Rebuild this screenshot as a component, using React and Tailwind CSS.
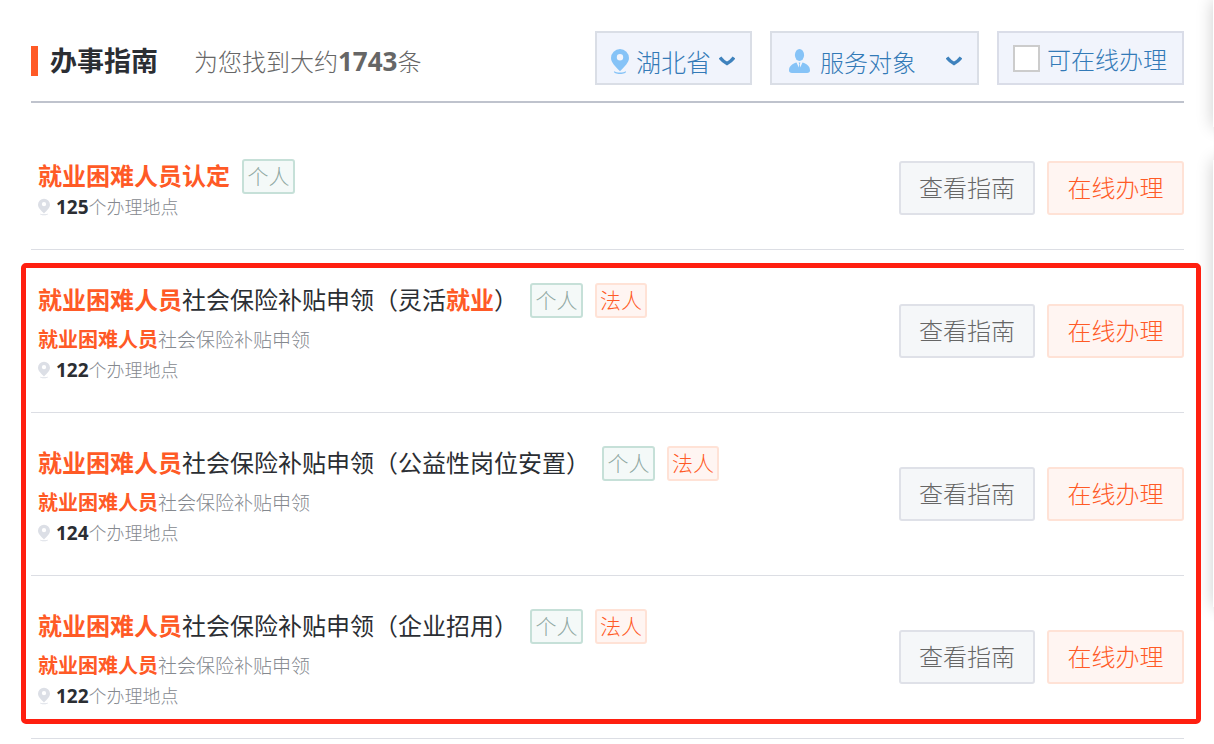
import { useState } from 'react';

const results = [
  {
    title: [{ text: '就业困难人员认定', hit: true }],
    tags: ['个人'],
    places: 125,
  },
  {
    title: [
      { text: '就业困难人员', hit: true },
      { text: '社会保险补贴申领（灵活' },
      { text: '就业', hit: true },
      { text: '）' },
    ],
    summary: true,
    tags: ['个人', '法人'],
    places: 122,
  },
  {
    title: [{ text: '就业困难人员', hit: true }, { text: '社会保险补贴申领（公益性岗位安置）' }],
    summary: true,
    tags: ['个人', '法人'],
    places: 124,
  },
  {
    title: [{ text: '就业困难人员', hit: true }, { text: '社会保险补贴申领（企业招用）' }],
    summary: true,
    tags: ['个人', '法人'],
    places: 122,
  },
];

const tagStyles = {
  个人: 'w-[53px] border-[#c6e0d8] bg-[#f4f9f8] text-[#8fa8a2]',
  法人: 'w-[52px] border-[#ffe2d6] bg-[#fff5f2] text-[#ff5a26]',
};

function Pin({ className }) {
  return (
    <svg viewBox="0 0 18 25" className={className} fill="currentColor" aria-hidden="true">
      <path
        fillRule="evenodd"
        d="M9 0a9 9 0 0 1 9 9c0 4.5-4.2 8.200-9 13.200C4.200 17.200 0 13.500 0 9a9 9 0 0 1 9-9zm0 5a3.200 3.200 0 1 0 0 6.400A3.200 3.200 0 0 0 9 5z"
      />
      <path d="M3 22.300c1.500 1 3.500 1.200 6 1.200s4.500-.2 6-1.200c.6 1.700-2.400 2.700-6 2.700s-6.600-1-6-2.700z" />
    </svg>
  );
}

function Person({ className }) {
  return (
    <svg viewBox="0 0 21 24" className={className} fill="currentColor" aria-hidden="true">
      <ellipse cx="10.5" cy="6" rx="4.600" ry="6" />
      <path d="M7.500 13.500l2.300 5 .4-3.200-.6-1.800h1.800l-.6 1.800.4 3.200 2.300-5c4.500 1.500 7.500 3.500 7.500 8 0 1.600-1 2.500-3 2.500H3c-2 0-3-.9-3-2.500 0-4.500 3-6.500 7.500-8z" />
    </svg>
  );
}

function Chevron() {
  return (
    <svg viewBox="0 0 16 10" className="pointer-events-none h-[10px] w-[16px] shrink-0" fill="none" aria-hidden="true">
      <path d="M1 1.500Q4 5.500 8 7.500q4-2 7-6" stroke="#3f82bd" strokeWidth="3.400" />
    </svg>
  );
}

function ResultRow({ item }) {
  return (
    <li className="flex items-center justify-between border-b border-[#dcdee4] pl-[7px]">
      <div className="pt-[33px] pb-[29px]">
        <div className="flex h-[35px] items-start gap-3">
          <h2 className="text-[24px] leading-[33px] text-[#2b2e33]">
            <a href="#guide">
              {item.title.map((part, i) =>
                part.hit ? <b key={i} className="font-bold text-[#ff5a26]">{part.text}</b> : <span key={i}>{part.text}</span>
              )}
            </a>
          </h2>
          {item.tags.map((tag) => (
            <span
              key={tag}
              className={`flex h-[35px] items-center justify-center rounded-[3px] border-2 text-[21px] font-light ${tagStyles[tag]}`}
            >
              {tag}
            </span>
          ))}
        </div>
        {item.summary && (
          <p className="mt-1 h-[35px] text-[19px] leading-[35px] font-light text-[#85898f]">
            <b className="text-[20px] font-bold text-[#ff5a26]">就业困难人员</b>社会保险补贴申领
          </p>
        )}
        <p className="flex h-[26px] items-center text-[18px] leading-[26px] font-light text-[#85898f]">
          <Pin className="mr-[6px] h-[18px] w-[12px] text-[#dcdfe6]" />
          <b className="text-[19px] font-bold text-[#2b2e33]">{item.places}</b>个办理地点
        </p>
      </div>
      <div className="flex shrink-0 gap-3 text-[24px] font-light">
        <button type="button" className="h-[54px] w-[136px] rounded-[3px] border-2 border-[#dfe1e8] bg-[#f5f7f9] text-[#666]">
          查看指南
        </button>
        <button type="button" className="h-[54px] w-[137px] rounded-[3px] border-2 border-[#ffe2d6] bg-[#fff5f2] text-[#ff5a26]">
          在线办理
        </button>
      </div>
    </li>
  );
}

export default function App() {
  const [onlineOnly, setOnlineOnly] = useState(false);

  return (
    <div className="flex min-h-screen overflow-hidden bg-white font-['Open_Sans','Noto_Sans_CJK_SC',sans-serif]">
      <main className="min-w-0 flex-1 pt-[31px] pr-[29px] pl-[31px]">
        <header className="flex items-center justify-between border-b-2 border-[#bfc3cd] pb-4">
          <div className="flex items-center pt-[6px]">
            <span className="h-[30px] w-[7px] bg-[#ff5a26]" />
            <h1 className="ml-3 text-[27px] leading-[40px] font-bold text-[#2b2e33]">办事指南</h1>
            <p className="ml-9 text-[24px] leading-[40px] font-light text-[#666]">
              为您找到大约<b className="text-[26px] font-bold">1743</b>条
            </p>
          </div>

          <div className="flex gap-[18px] text-[24px] font-light text-[#337ab7]">
            <label className="flex h-[54px] w-[157px] items-center border-2 border-[#dadee6] bg-[#f1f4fc] pt-[6px] pr-[15px] pl-[14px]">
              <Pin className="h-[25px] w-[18px] shrink-0 text-[#86c3f7]" />
              <select aria-label="地区" className="ml-[7px] min-w-0 flex-1 appearance-none bg-transparent pt-[3px] text-[25px] outline-none">
                <option>湖北省</option>
              </select>
              <Chevron />
            </label>
            <label className="flex h-[54px] w-[209px] items-center border-2 border-[#dadee6] bg-[#f1f4fc] pt-[6px] pr-[15px] pl-[17px]">
              <Person className="h-[24px] w-[21px] shrink-0 text-[#86c3f7]" />
              <select aria-label="服务对象" className="ml-[10px] min-w-0 flex-1 appearance-none bg-transparent pt-[3px] outline-none">
                <option>服务对象</option>
              </select>
              <Chevron />
            </label>
            <label className="flex h-[54px] w-[187px] items-center border-2 border-[#dadde8] bg-[#f1f4fc] pl-[14px]">
              <input
                type="checkbox"
                checked={onlineOnly}
                onChange={(e) => setOnlineOnly(e.target.checked)}
                className="h-[27px] w-[27px] appearance-none border-2 border-[#ccc] bg-white checked:bg-[#337ab7]"
              />
              <span className="ml-[7px] pt-1">可在线办理</span>
            </label>
          </div>
        </header>

        <ul className="pt-[23px]">
          <ResultRow item={results[0]} />
        </ul>
        <div className="relative">
          <ul>
            {results.slice(1).map((item, i) => (
              <ResultRow key={i} item={item} />
            ))}
          </ul>
          {/* highlight frame around the matching services */}
          <div className="pointer-events-none absolute top-[13px] right-[-17px] bottom-[15px] left-[-10px] rounded-[5px] border-5 border-[#ff1f10]" />
        </div>
      </main>

      {/* edge of the neighbouring side panels */}
      <aside className="flex w-px flex-col gap-[33px]">
        <div className="h-[127px] w-20 bg-white shadow-[0_0_16px_rgba(0,0,0,0.2)]" />
        <div className="h-[447px] w-20 bg-white shadow-[0_0_16px_rgba(0,0,0,0.2)]" />
      </aside>
    </div>
  );
}
